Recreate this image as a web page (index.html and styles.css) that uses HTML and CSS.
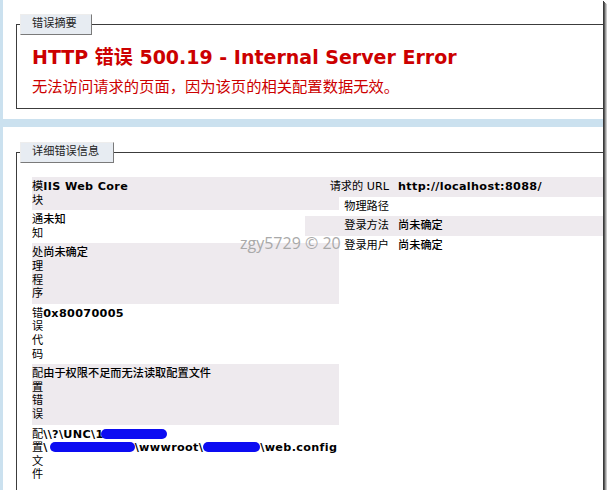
FILE: index.html
```html
<!DOCTYPE html>
<html>
<head>
<meta charset="utf-8">
<link rel="stylesheet" href="styles.css">
</head>
<body>
<div class="frame">
  <div class="panel summary">
    <fieldset class="fs fs-sum">
      <legend class="lg">错误摘要</legend>
      <h2 class="title">HTTP 错误 500.19 - Internal Server Error</h2>
      <h3 class="subtitle">无法访问请求的页面，因为该页的相关配置数据无效。</h3>
    </fieldset>
  </div>
  <div class="panel details">
    <fieldset class="fs fs-det">
      <legend class="lg">详细错误信息</legend>
      <div class="detail-grid">
        <table class="tbl tl">
          <tr class="alt"><th>模块</th><td>IIS Web Core</td></tr>
          <tr><th>通知</th><td class="cj">未知</td></tr>
          <tr class="alt"><th>处理程序</th><td class="cj">尚未确定</td></tr>
          <tr><th>错误代码</th><td>0x80070005</td></tr>
          <tr class="alt"><th>配置错误</th><td class="cj">由于权限不足而无法读取配置文件</td></tr>
          <tr><th>配置文件</th><td class="path"><span class="ln">\\?\UNC\1<span class="blob b1"></span></span><br><span class="ln">\<span class="blob b2"></span>\wwwroot\<span class="blob b3"></span>\web.config</span></td></tr>
        </table>
        <table class="tbl tr">
          <tr class="alt"><th>请求的 URL</th><td>http://localhost:8088/</td></tr>
          <tr><th>物理路径</th><td></td></tr>
          <tr class="alt"><th>登录方法</th><td class="cj">尚未确定</td></tr>
          <tr><th>登录用户</th><td class="cj">尚未确定</td></tr>
        </table>
      </div>
    </fieldset>
  </div>
  <div class="watermark">zgy5729 © 20</div>
</div>
</body>
</html>
```

FILE: styles.css
```css
html, body {
  margin: 0;
  padding: 0;
  background: #ffffff;
}

body {
  font-family: "DejaVu Sans", "Noto Sans CJK SC", sans-serif;
  font-size: 11.2px;
  color: #000;
}

.frame {
  position: relative;
  width: 603px;
  height: 490px;
  overflow: hidden;
  background: #cbe1ef;
  box-shadow: 1px 1px 0 #3a3a3a, 2px 2px 0 #5c5c5c, 3px 3px 0 #9a9a9a, 4px 4px 1px #c8c8c8;
}

.panel {
  background: #fff;
  margin-left: 3px;
  width: 680px;
}

.summary {
  padding: 14px 0 10px 0;
}

.details {
  margin-top: 8px;
  padding: 15px 0 40px 0;
}

.fs {
  margin: 0 0 0 13px;
  border: 1px solid #3c3c3c;
  width: 620px;
  min-width: 0;
}

.fs-sum {
  padding: 10px 15px 11px 15px;
}

.fs-det {
  padding: 14px 15px 10px 15px;
}

.lg {
  background: #e7ecf2;
  border-top: 1px solid #ededed;
  border-left: 1px solid #ededed;
  border-right: 1px solid #7a7a7a;
  border-bottom: 1px solid #7a7a7a;
  color: #222;
  font-weight: normal;
  font-size: 11.2px;
  line-height: 13px;
  padding: 2px 14px 4px 11px;
  margin-left: -12px;
}

.title {
  margin: 0;
  font-size: 19px;
  line-height: 24px;
  color: #c00;
  font-weight: bold;
}

.subtitle {
  margin: 8px 0 0 0;
  font-size: 15.3px;
  line-height: 20px;
  color: #c00;
  font-weight: normal;
}

.detail-grid {
  display: grid;
  grid-template-columns: 273px 34px 1fr;
  align-items: start;
}

.tbl {
  border-collapse: collapse;
  border-spacing: 0;
  margin: 0;
  grid-row: 1;
}

.tl {
  grid-column: 1 / 3;
  width: 100%;
}

.tr {
  grid-column: 2 / 4;
  width: 100%;
}

.tbl th,
.tbl td {
  padding: 3px 0;
  line-height: 13.6px;
  vertical-align: top;
  font-weight: bold;
  letter-spacing: 0.35px;
  text-align: left;
}

.tbl th {
  font-weight: normal;
  letter-spacing: 0;
}

.tl th {
  width: 1px;
}

.tr th {
  width: 84px;
  padding-right: 9px;
  text-align: right;
  white-space: nowrap;
}

.tr td {
  white-space: nowrap;
}

.tbl td.cj {
  font-weight: 500;
  letter-spacing: 0;
}

.alt th,
.alt td {
  background: #eeeaee;
}

.ln {
  white-space: nowrap;
}

.blob {
  display: inline-block;
  height: 10px;
  background: #0c0cf2;
  border-radius: 6px;
  vertical-align: -1px;
}

.b1 {
  width: 66px;
  margin-left: -3px;
}

.b2 {
  width: 85px;
  margin-left: 2px;
}

.b3 {
  width: 57px;
}

.watermark {
  position: absolute;
  left: 240px;
  top: 232px;
  font-family: "Open Sans", "DejaVu Sans", sans-serif;
  font-size: 16px;
  color: #a9a9a9;
  white-space: nowrap;
}
```
